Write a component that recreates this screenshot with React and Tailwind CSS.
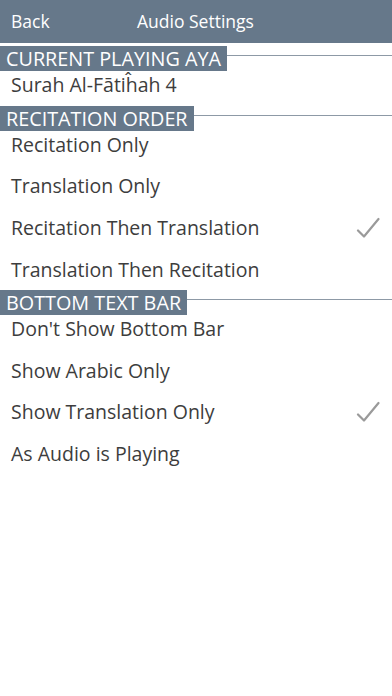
import React from 'react';

const sections = [
  { title: 'CURRENT PLAYING AYA', items: [{ label: 'Surah Al-Fātiĥah 4' }] },
  {
    title: 'RECITATION ORDER',
    items: [
      { label: 'Recitation Only' },
      { label: 'Translation Only' },
      { label: 'Recitation Then Translation', checked: true },
      { label: 'Translation Then Recitation' },
    ],
  },
  {
    title: 'BOTTOM TEXT BAR',
    items: [
      { label: "Don't Show Bottom Bar" },
      { label: 'Show Arabic Only' },
      { label: 'Show Translation Only', checked: true },
      { label: 'As Audio is Playing' },
    ],
  },
];

function Check() {
  return (
    <svg width="24" height="22" viewBox="0 0 24 22" fill="none">
      <path d="M2 13.5 L8 19.5 L22.5 2" stroke="#9a9a9a" strokeWidth="2.2" strokeLinecap="round" strokeLinejoin="round" />
    </svg>
  );
}

function Section({ title, items }) {
  return (
    <div>
      <div className="flex items-start">
        <div className="h-[25px] bg-[#66788a] pl-[6px] pr-[6px] text-[19.8px] leading-[25px] text-white">{title}</div>
        <div className="mt-[9px] h-px flex-1 bg-[#8d99a6]" />
      </div>
      <div className="-mt-[7px]">
        {items.map(item => (
          <div key={item.label} className="flex h-[41.6px] items-center justify-between pl-[11px] pr-[12px]">
            <span className="text-[19.5px] text-[#3d3d3d]">{item.label}</span>
            {item.checked && <Check />}
          </div>
        ))}
      </div>
    </div>
  );
}

export default function App() {
  return (
    <div className="min-h-[696px] w-[392px] bg-white font-['Open_Sans',sans-serif]">
      <div className="relative flex h-[43px] items-center bg-[#66788a] text-[17.5px] text-white">
        <span className="pl-[11px]">Back</span>
        <span className="absolute left-[137px]">Audio Settings</span>
      </div>
      <div className="pt-[3px]">
        {sections.map(s => (
          <Section key={s.title} {...s} />
        ))}
      </div>
    </div>
  );
}
